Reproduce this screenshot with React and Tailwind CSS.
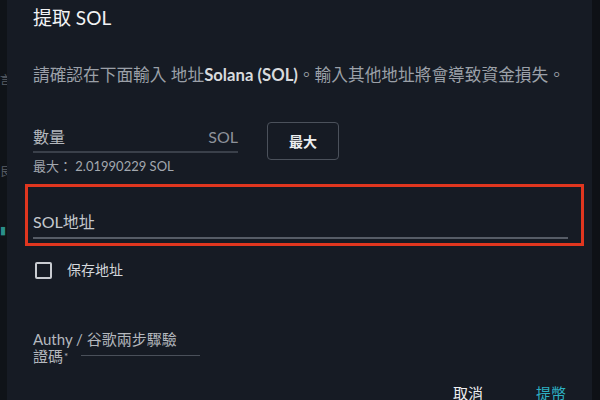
import React from 'react';

const font = { fontFamily: 'Lato, "Noto Sans CJK TC", sans-serif' };

const App = () => {
    return (
        <div className="w-[600px] h-[400px] overflow-hidden flex bg-[#0e1116]" style={font}>
            {/* backdrop strip */}
            <div className="w-[7px] bg-[#0f1318] flex flex-col text-[11px] text-[#5b6068] overflow-hidden">
                <div className="h-[72px]" />
                <div>言</div>
                <div className="h-[75px]" />
                <div>艮</div>
                <div className="h-[42px]" />
                <div className="text-[#2a8f8a]">▮</div>
            </div>

            {/* dialog */}
            <div className="w-[585px] bg-[#161b24] flex flex-col overflow-hidden [&>*]:shrink-0">
                <div className="pl-[26px] pt-[5px]">
                    <h2 className="text-[19px] leading-[26px] text-[#f1f2f4]">提取 SOL</h2>
                </div>

                <p className="pl-[26px] mt-[33px] text-[16.7px] leading-[22px] text-[#9ba0a8] whitespace-nowrap">
                    請確認在下面輸入 地址<span className="font-bold text-[#d8dadd]">Solana (SOL)</span>。輸入其他地址將會導致資金損失。
                </p>

                {/* amount row */}
                <div className="pl-[26px] mt-[35px] flex items-start">
                    <div className="w-[205px]">
                        <div className="flex items-end justify-between border-b-2 border-[#3a404a] pb-[4px] h-[32px]">
                            <span className="text-[16px] leading-[20px] text-[#b4b8be]">數量</span>
                            <span className="text-[16px] leading-[20px] text-[#8d929a]">SOL</span>
                        </div>
                        <div className="mt-[5px] text-[13px] leading-[16px] text-[#a3a8af]">最大：&nbsp;2.01990229 SOL</div>
                    </div>
                    <button className="ml-[29px] mt-[1px] w-[72px] h-[38px] rounded-[4px] border border-[#4b515b] text-[14px] font-bold text-[#eceef0]">最大</button>
                </div>

                {/* address field (highlighted) */}
                <div className="ml-[18px] mt-[10px] w-[559px] h-[62px] border-[3px] border-[#e0361f] flex flex-col justify-end pb-[4px] pl-[5px] pr-[13px]">
                    <div className="border-b-2 border-[#565c66] pb-[3px]">
                        <span className="text-[16px] leading-[22px] text-[#c4c8cd]">SOL地址</span>
                    </div>
                </div>

                {/* save address */}
                <label className="pl-[28px] mt-[14px] flex items-center gap-[15px]">
                    <span className="w-[17px] h-[17px] border-2 border-[#c9ccd1] rounded-[2px]" />
                    <span className="text-[14px] leading-[20px] text-[#d4d7db]">保存地址</span>
                </label>

                {/* 2FA */}
                <div className="pl-[26px] mt-[51px] w-[193px] relative">
                    <div className="text-[15px] leading-[17px] text-[#b4b8be]">
                        Authy / 谷歌兩步驟驗<br />證碼<span className="text-[10px] align-top ml-px">*</span>
                    </div>
                    <div className="absolute left-[74px] right-0 top-[24px] h-px bg-[#4a505a]" />
                </div>

                {/* actions */}
                <div className="mt-[17px] flex justify-end pr-[26px] gap-[53px]">
                    <button className="text-[15px] leading-[22px] text-[#eef0f2]">取消</button>
                    <button className="text-[15px] leading-[22px] text-[#2db0c2]">提幣</button>
                </div>
            </div>

            <div className="flex-1 bg-[#0e1116]" />
        </div>
    );
};

export default App;
